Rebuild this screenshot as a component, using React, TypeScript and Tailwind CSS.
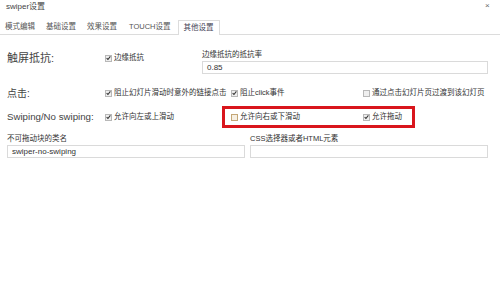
import React from "react";

function Check({ checked, tan = false }: { checked: boolean; tan?: boolean }) {
  return (
    <span
      className={`inline-flex w-[7px] h-[7px] border items-center justify-center mr-[2px] shrink-0 ${
        tan ? "border-[#c4a676] bg-[#f6efe2]" : "border-[#b8b8b8] bg-[#efefef]"
      }`}
    >
      {checked && (
        <svg width="6" height="6" viewBox="0 0 8 8">
          <path d="M1 4.3 L3.1 6.4 L7 1.4" fill="none" stroke="#333" strokeWidth="1.7" />
        </svg>
      )}
    </span>
  );
}

function Cb({ checked, label, cls = "", tan = false }: { checked: boolean; label: string; cls?: string; tan?: boolean }) {
  return (
    <div className={`flex items-center text-[7.5px] leading-[10px] text-[#333] whitespace-nowrap ${cls}`}>
      <Check checked={checked} tan={tan} />
      <span>{label}</span>
    </div>
  );
}

export default function App() {
  const font = { fontFamily: '"Liberation Sans", Arial, "Noto Sans CJK SC", sans-serif' };
  return (
    <div className="w-[500px] h-[283px] bg-white relative overflow-hidden" style={font}>
      <div className="h-[20px] flex items-start pt-[2px] pl-[6px] text-[8px] leading-[10px] text-[#444]">swiper设置</div>
      <span className="absolute left-[485px] top-[0px] text-[8px] text-[#666]">×</span>
      <div className="flex items-end h-[15px] border-b border-[#dcdcdc] text-[7.5px] text-[#555]">
        <div className="px-[5px] h-[14px] flex items-center">模式编辑</div>
        <div className="px-[5px] h-[14px] flex items-center ml-[1px]">基础设置</div>
        <div className="px-[5px] h-[14px] flex items-center ml-[1px]">效果设置</div>
        <div className="px-[5px] h-[14px] flex items-center ml-[2px]">TOUCH设置</div>
        <div className="px-[5px] h-[15px] flex items-center ml-[2px] border border-b-0 border-[#dcdcdc] bg-white -mb-[1px] text-[#445]">其他设置</div>
      </div>

      <div className="flex mt-[15px] h-[25px]">
        <div className="w-[105px] h-[16px] flex items-center pl-[7px] text-[11px] text-[#444]">触屏抵抗:</div>
        <Cb checked label="边缘抵抗" cls="w-[97px] h-[16px]" />
        <div className="flex flex-col">
          <div className="text-[7.5px] text-[#333] h-[10px] leading-[10px]">边缘抵抗的抵抗率</div>
          <div className="w-[286px] h-[13px] border border-[#dadada] mt-[1px] text-[8px] text-[#333] pl-[4px] flex items-center">0.85</div>
        </div>
      </div>

      <div className="flex items-center mt-[11px] h-[14px]">
        <div className="w-[105px] pl-[7px] text-[10px] text-[#444]">点击:</div>
        <Cb checked label="阻止幻灯片滑动时意外的链接点击" cls="w-[126px]" />
        <Cb checked label="阻止click事件" cls="w-[132px]" />
        <Cb checked={false} label="通过点击幻灯片页过渡到该幻灯页" />
      </div>

      <div className="flex items-center mt-[6px] h-[22px]">
        <div className="w-[105px] pl-[7px] text-[9.7px] text-[#444] whitespace-nowrap">Swiping/No swiping:</div>
        <Cb checked label="允许向左或上滑动" cls="w-[117px]" />
        <div className="flex items-center w-[193px] h-[22px] border-[3px] border-[#d9161c] pl-[6px]">
          <Cb checked={false} tan label="允许向右或下滑动" cls="w-[132px]" />
          <Cb checked label="允许拖动" />
        </div>
      </div>

      <div className="flex mt-[6px] pl-[7px] gap-[5px]">
        <div className="flex flex-col">
          <div className="text-[7.5px] text-[#333] h-[10px] leading-[10px]">不可拖动块的类名</div>
          <div className="w-[238px] h-[13px] border border-[#dadada] mt-[1px] text-[8px] text-[#333] pl-[4px] flex items-center">swiper-no-swiping</div>
        </div>
        <div className="flex flex-col">
          <div className="text-[7.5px] text-[#333] h-[10px] leading-[10px]">CSS选择器或者HTML元素</div>
          <div className="w-[238px] h-[13px] border border-[#dadada] mt-[1px]"></div>
        </div>
      </div>
    </div>
  );
}
